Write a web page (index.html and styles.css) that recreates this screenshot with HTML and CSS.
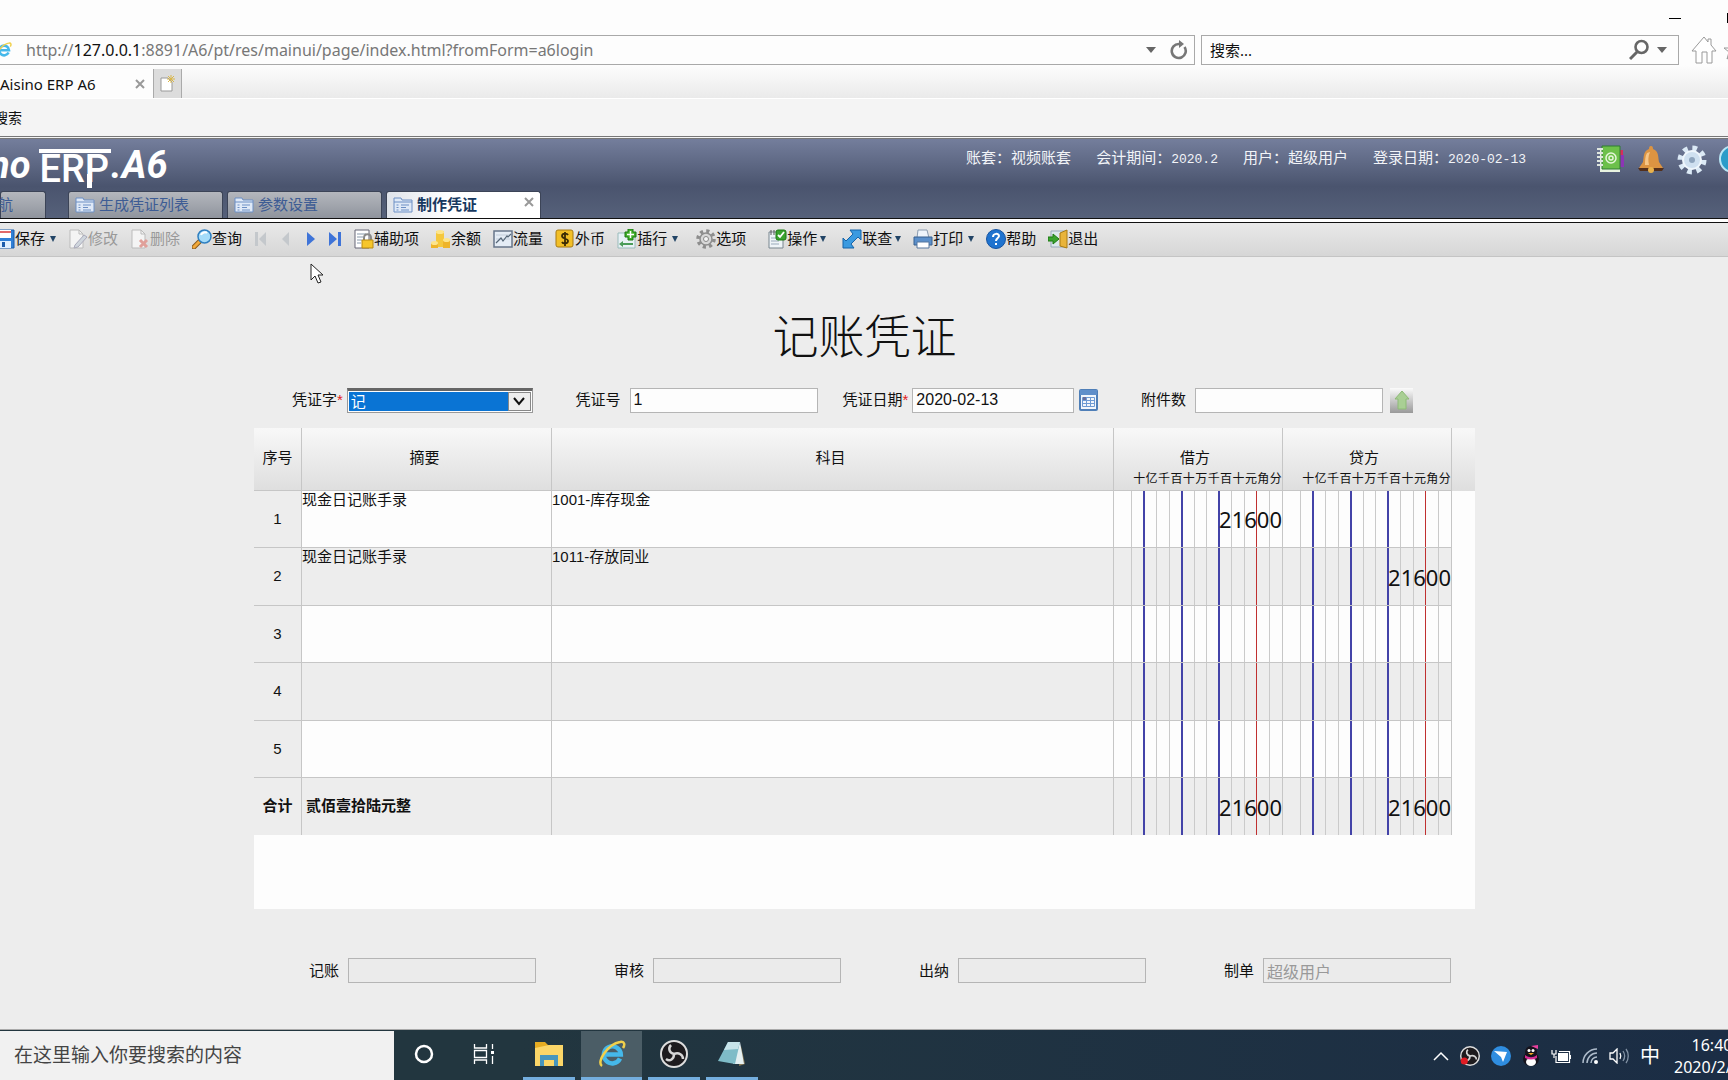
FILE: index.html
```html
<!DOCTYPE html>
<html lang="zh-CN">
<head>
<meta charset="utf-8">
<title>Aisino ERP A6</title>
<link rel="stylesheet" href="styles.css">
</head>
<body>
<svg class="defs" aria-hidden="true">
  <symbol id="i-form" viewBox="0 0 20 16"><path d="M1 1h7l1 2h10v12H1z" fill="#dfe9f7" stroke="#6c8fc4"/><path d="M1 5h18M3.500 8h2M3.500 10.500h2M3.500 13h2M8 8h8M8 10.500h5M8 13h8" stroke="#6c8fc4" fill="none"/></symbol>
  <symbol id="i-doc" viewBox="0 0 20 20"><path d="M2 1h9l4 4v14H2z" fill="#f4f4f4" stroke="#bbb"/><path d="M11 1v4h4" fill="none" stroke="#bbb"/></symbol>
  <symbol id="i-ie" viewBox="0 0 28 28"><path d="M22 18.500a8.500 8.500 0 1 1 .8-4H8" fill="none" stroke="#45b8ea" stroke-width="4.500"/><path d="M4 26C-2 22 10 4 22 2c5-1 5 3 3 6" fill="none" stroke="#f1d04c" stroke-width="2.500"/></symbol>
  <symbol id="i-obs" viewBox="0 0 28 28"><circle cx="14" cy="14" r="13" fill="#1d1b1e" stroke="#ddd" stroke-width="2"/><path d="M14 14c-5-1-6-6-3-9M14 14c5-2 9 1 9 5M14 14c0 5-4 8-8 5" fill="none" stroke="#d6d6d6" stroke-width="2.500"/></symbol>
</svg>

<header class="browser">
  <div class="titlebar">
    <button class="win" aria-label="最小化"><svg width="12" height="10"><path d="M0 5.500h12" stroke="#000"/></svg></button>
    <button class="win" aria-label="最大化"><svg width="10" height="10"><path d="M1 .5h9v9H1z" fill="none" stroke="#000" stroke-width="2"/></svg></button>
  </div>
  <div class="navrow">
    <div class="address">
      <svg class="ie-small" width="16" height="18"><use href="#i-ie"/></svg>
      <span class="url">http://<b>127.0.0.1</b>:8891/A6/pt/res/mainui/page/index.html?fromForm=a6login</span>
      <svg width="10" height="6"><path d="M0 0h10L5 6z" fill="#666"/></svg>
      <button aria-label="刷新"><svg width="18" height="20" viewBox="0 0 18 20"><path d="M14.500 7A7 7 0 1 1 9 4h3" fill="none" stroke="#777" stroke-width="2.600"/><path d="M9 0l5 4-5 4z" fill="#777"/></svg></button>
    </div>
    <div class="websearch">
      <input type="text" placeholder="搜索..." aria-label="搜索">
      <svg width="20" height="22" viewBox="0 0 20 22"><circle cx="12.500" cy="8" r="6" fill="none" stroke="#666" stroke-width="2.600"/><path d="M8 13l-7 7" stroke="#666" stroke-width="3"/></svg>
      <svg width="10" height="6"><path d="M0 0h10L5 6z" fill="#666"/></svg>
    </div>
    <svg class="home" width="26" height="28" viewBox="0 0 26 28"><path d="M1 15L13 1l4 5V3h3v6l5 6h-4v12h-5v-11h-5v11H5V15z" fill="#fff" stroke="#999"/></svg>
    <svg class="star" width="20" height="20" viewBox="0 0 20 20"><path d="M1 8h7l2-7 2 7h7l-5 4 2 7-6-4-6 4 2-7z" fill="#fff" stroke="#999"/></svg>
  </div>
  <nav class="btabs">
    <div class="btab"><span>Aisino ERP A6</span><button aria-label="关闭"><svg width="10" height="10"><path d="M1 1l8 8M9 1L1 9" stroke="#999" stroke-width="2"/></svg></button></div>
    <button class="newtab" aria-label="新建选项卡"><svg width="16" height="18" viewBox="0 0 16 18"><path d="M1 3h7l4 4v9H1z" fill="#fff" stroke="#999"/><path d="M11 0v8M7 4h8M8 1l6 6M14 1L8 7" stroke="#d9b64a"/></svg></button>
  </nav>
  <div class="favbar"><a href="#">搜索</a></div>
</header>

<section class="apphead">
  <div class="brand">
    <div class="logo"><span class="wide">no</span><span class="erp">ERP</span><span>.A6</span></div>
    <ul class="session">
      <li>账套：视频账套</li>
      <li>会计期间：<span>2020.2</span></li>
      <li>用户：超级用户</li>
      <li>登录日期：<span>2020-02-13</span></li>
    </ul>
    <div class="headicons">
      <svg width="28" height="28" viewBox="0 0 28 28"><path d="M23 5h3v5h-3z" fill="#d62c5c"/><path d="M23 10h4v12h-4z" fill="#8d35b5"/><path d="M3 3h20v24H3z" fill="#e8f3e0"/><path d="M5 1h18v23H5z" fill="#6cc04a" stroke="#2e7d32"/><path d="M0 4h6M0 8h6M0 12h6M0 16h6M0 20h6" stroke="#dfe6df" stroke-width="2"/><circle cx="14" cy="13" r="5" fill="none" stroke="#e5f6da" stroke-width="1.500"/><circle cx="14" cy="13" r="2" fill="none" stroke="#e5f6da" stroke-width="1.500"/></svg>
      <svg width="28" height="28" viewBox="0 0 28 28"><path d="M14 1c2 0 2 2 2 3 6 2 5 8 6 13l4 6H2l4-6c1-5 0-11 6-13 0-1 0-3 2-3z" fill="#dc9442"/><path d="M10 8c-2 3-2 8-2 12h4c-1-4-1-9 1-13z" fill="#f6c687"/><path d="M1 23h26l-2 3H3z" fill="#53301c"/><circle cx="14" cy="25" r="3" fill="#e9b24c"/></svg>
      <svg width="30" height="30" viewBox="0 0 30 30"><circle cx="15" cy="15" r="11" fill="none" stroke="#dceaf6" stroke-width="7" stroke-dasharray="4.320"/><circle cx="15" cy="15" r="9" fill="#cfe0f0" stroke="#eff6fc" stroke-width="2"/><circle cx="15" cy="15" r="3" fill="#8ea4bd"/></svg>
      <svg width="28" height="28" viewBox="0 0 28 28"><circle cx="14" cy="14" r="13" fill="#2b9cc9" stroke="#b8e6f5" stroke-width="2"/></svg>
    </div>
  </div>
  <nav class="apptabs">
    <a href="#" class="cut">导航</a>
    <a href="#"><svg><use href="#i-form"/></svg>生成凭证列表</a>
    <a href="#"><svg><use href="#i-form"/></svg>参数设置</a>
    <a href="#" class="on"><svg><use href="#i-form"/></svg>制作凭证<i><svg width="10" height="10"><path d="M1 1l8 8M9 1L1 9" stroke="#999" stroke-width="2"/></svg></i></a>
  </nav>
</section>

<div class="toolbar">
  <button><svg viewBox="0 0 20 20"><path d="M1 1h18v18H1z" fill="#2f7fd6" stroke="#1b5cab"/><path d="M4 1h12v8H4z" fill="#fff"/><path d="M5 12h11v7H5z" fill="#dfefff"/><path d="M7 13h3v5H7z" fill="#1b5cab"/><path d="M4 2h12v2H4z" fill="#e16a6a"/></svg>保存<em class="far"></em></button>
  <button disabled><svg><use href="#i-doc"/><path d="M7 16l9-10 3 2-9 10-4 1z" fill="#cfd6dd" stroke="#aab"/></svg>修改</button>
  <button disabled><svg><use href="#i-doc"/><path d="M10 11l7 7M17 11l-7 7" stroke="#e0a09a" stroke-width="3"/></svg>删除</button>
  <button><svg viewBox="0 0 20 20"><path d="M8 12l-6 6" stroke="#8a5a1c" stroke-width="5" stroke-linecap="round"/><path d="M7 13l-5 5" stroke="#f2a93b" stroke-width="3" stroke-linecap="round"/><circle cx="12.500" cy="7.500" r="6.500" fill="#a5dcf9" stroke="#2f7fc0" stroke-width="1.500"/><path d="M9 6c1-3 5-3 6-2" stroke="#fff" stroke-width="2" fill="none"/></svg>查询</button>
  <button class="nav" disabled aria-label="首张"><svg viewBox="0 0 13 16"><path d="M1 1h3v14H1zM12 1v14L5 8z" fill="#c4c8cc"/></svg></button>
  <button class="nav" disabled aria-label="上张"><svg viewBox="0 0 13 16"><path d="M10 1v14L3 8z" fill="#c4c8cc"/></svg></button>
  <button class="nav" aria-label="下张"><svg viewBox="0 0 13 16"><path d="M3 1v14l8-7z" fill="#3f74d8"/></svg></button>
  <button class="nav" aria-label="末张"><svg viewBox="0 0 13 16"><path d="M0 1v14l8-7zM9 1h3v14H9z" fill="#3f74d8"/></svg></button>
  <button><svg viewBox="0 0 20 20"><path d="M1 1h14v18H1z" fill="#fff" stroke="#667"/><path d="M3 5h9M3 8h6M3 11h5M3 14h4" stroke="#89a"/><path d="M10 11V9c0-5 7-5 7 0v2" fill="none" stroke="#888" stroke-width="2"/><path d="M8 11h11v8H8z" fill="#f6c62c" stroke="#b98a10"/></svg>辅助项</button>
  <button><svg viewBox="0 0 20 20"><path d="M5 2h8v16H5z" fill="#f5c83d"/><ellipse cx="9" cy="3" rx="4" ry="2" fill="#fde58c"/><path d="M0 14h7v5H0zM12 11h7v8h-7z" fill="#eeb42a"/><ellipse cx="3.500" cy="14" rx="3.500" ry="2" fill="#fde58c"/><ellipse cx="15.500" cy="11" rx="3.500" ry="2" fill="#fde58c"/></svg>余额</button>
  <button><svg viewBox="0 0 20 20"><path d="M1 2h18v16H1z" fill="#e4ecf5" stroke="#67768a" stroke-width="1.500"/><path d="M3 6h14M3 10h14" stroke="#c3cedb"/><path d="M3 14l5-5 2 3 4-5 1 1 3-3" fill="none" stroke="#567" stroke-width="1.200"/></svg>流量</button>
  <button><svg viewBox="0 0 20 20"><rect x="1" y="1" width="17" height="17" rx="2" fill="#f2bf27" stroke="#a87b12"/><path d="M13 6C12 4 7 4 7 7s6 2 6 5-5 3-6 1M10 3v14" fill="none" stroke="#3c2c05" stroke-width="1.800"/></svg>外币</button>
  <button><svg viewBox="0 0 20 20"><path d="M1 4h17v15H1z" fill="#e8f1f6" stroke="#9bb"/><path d="M6 12l-4 3 4 3v-2h10v-2H6z" fill="#4a9c5a"/><path d="M11 0h5v3h3v5h-3v3h-5V8H8V3h3z" fill="#43b02a" stroke="#1d7a12"/><path d="M13.500 2v7M10 5.500h7" stroke="#fff" stroke-width="1.500"/></svg>插行<em class="far"></em></button>
  <button class="g2"><svg viewBox="0 0 20 20"><circle cx="10" cy="10" r="8" fill="none" stroke="#8d8d8d" stroke-width="3.500" stroke-dasharray="3.140"/><circle cx="10" cy="10" r="6" fill="#d8d8d8" stroke="#8d8d8d" stroke-width="1.500"/><circle cx="10" cy="10" r="2.500" fill="#f5f5f5" stroke="#888"/></svg>选项</button>
  <button class="g3"><svg viewBox="0 0 20 20"><path d="M2 3h14v16H2z" fill="#eef4f8" stroke="#78868f"/><path d="M4 1v5M7 1v5" stroke="#555"/><path d="M4 9h5M4 12h8M4 15h8" stroke="#9ab"/><rect x="9" y="1" width="10" height="10" rx="2" fill="#3aa32f" stroke="#1d7a12"/><path d="M11 6l2 2 4-5" fill="none" stroke="#fff" stroke-width="1.800"/></svg>操作<em></em></button>
  <button class="g1"><svg viewBox="0 0 20 20"><path d="M8 1h11v10l-3-3-7 7 3 4H1V9l3 3 7-7z" fill="#3a9ae0" stroke="#1563a8"/></svg>联查<em></em></button>
  <button><svg viewBox="0 0 20 20"><path d="M5 1h9l2 8H4z" fill="#eef4fb" stroke="#8a9bb0"/><path d="M1 8h18v8H1z" fill="#5b8fca" stroke="#38618f"/><path d="M4 13h12v6H4z" fill="#fff" stroke="#56779f"/></svg>打印<em class="far"></em></button>
  <button><svg viewBox="0 0 20 20"><circle cx="10" cy="10" r="9.500" fill="#1f73cf" stroke="#1553a0"/><path d="M7 8c0-4 6-4 6-1 0 2-3 2-3 5M10 14v2" fill="none" stroke="#fff" stroke-width="2"/></svg>帮助</button>
  <button><svg viewBox="0 0 20 20"><path d="M3 2h15v16H3z" fill="#dce8ee" stroke="#9ab"/><path d="M12 4l7-3v18l-7-2z" fill="#e9b43a" stroke="#a87b12"/><path d="M0 8h5V5l6 5-6 5v-3H0z" fill="#3aa32f" stroke="#1d7a12"/></svg>退出</button>
</div>

<main>
  <h1>记账凭证</h1>
  <form class="fields">
    <div class="f"><label class="req" for="word">凭证字<sup>*</sup></label>
      <div class="pick"><select id="word"><option>记</option></select><span><svg width="12" height="10"><path d="M1 2l5 6 5-6" fill="none" stroke="#111" stroke-width="2"/></svg></span></div></div>
    <div class="pair">
      <div class="f"><label for="no">凭证号</label><input id="no" type="text" value="1"></div>
      <div class="f"><label class="req" for="date">凭证日期<sup>*</sup></label><input id="date" class="date" type="text" value="2020-02-13">
        <button type="button" aria-label="选择日期"><svg width="19" height="22" viewBox="0 0 19 22"><rect x="1" y="1" width="17" height="20" rx="1" fill="#f1f6fc" stroke="#4f7fb8" stroke-width="2"/><path d="M1 1h17v5H1z" fill="#5f8fca"/><path d="M3.500 8.500h12v9h-12zM3.500 11.500h12M3.500 14.500h12M7.500 8v9M11.500 8v9" fill="none" stroke="#6d9ad4"/><path d="M4 8h3v3H4z" fill="#6a6f9c"/></svg></button></div>
    </div>
    <div class="f"><label for="att">附件数</label><input id="att" type="text">
      <button type="button" class="up" aria-label="上传附件"><svg width="18" height="20" viewBox="0 0 18 20"><path d="M9 1l7 8h-3v10H5V9H2z" fill="#a9cf94" stroke="#8dba76"/></svg></button></div>
  </form>

  <div class="sheet">
    <table>
      <colgroup><col class="c1"><col class="c2"><col><col class="c4"><col class="c4"><col class="c5"></colgroup>
      <thead><tr><th>序号</th><th class="s">摘要</th><th class="s">科目</th>
        <th class="m">借方<div class="units"><span>十</span><span>亿</span><span>千</span><span>百</span><span>十</span><span>万</span><span>千</span><span>百</span><span>十</span><span>元</span><span>角</span><span>分</span></div></th>
        <th class="m">贷方<div class="units"><span>十</span><span>亿</span><span>千</span><span>百</span><span>十</span><span>万</span><span>千</span><span>百</span><span>十</span><span>元</span><span>角</span><span>分</span></div></th>
        <th class="pad"></th></tr></thead>
      <tbody>
        <tr><td class="n">1</td><td>现金日记账手录</td><td>1001-库存现金</td><td class="money">21600</td><td class="money"></td><td class="pad"></td></tr>
        <tr><td class="n">2</td><td>现金日记账手录</td><td>1011-存放同业</td><td class="money"></td><td class="money">21600</td><td class="pad"></td></tr>
        <tr><td class="n">3</td><td></td><td></td><td class="money"></td><td class="money"></td><td class="pad"></td></tr>
        <tr><td class="n">4</td><td></td><td></td><td class="money"></td><td class="money"></td><td class="pad"></td></tr>
        <tr><td class="n">5</td><td></td><td></td><td class="money"></td><td class="money"></td><td class="pad"></td></tr>
      </tbody>
      <tfoot><tr><td class="n">合计</td><td class="sum">贰佰壹拾陆元整</td><td></td><td class="money">21600</td><td class="money">21600</td><td class="pad"></td></tr></tfoot>
    </table>
  </div>

  <div class="signs">
    <div class="f"><label for="s1">记账</label><input id="s1" type="text" disabled></div>
    <div class="f"><label for="s2">审核</label><input id="s2" type="text" disabled></div>
    <div class="f"><label for="s3">出纳</label><input id="s3" type="text" disabled></div>
    <div class="f"><label for="s4">制单</label><input id="s4" type="text" value="超级用户" disabled></div>
  </div>
</main>

<footer class="taskbar">
  <input type="text" placeholder="在这里输入你要搜索的内容" aria-label="在这里输入你要搜索的内容">
  <div class="apps">
    <button aria-label="Cortana"><svg width="22" height="22"><circle cx="11" cy="11" r="8" fill="none" stroke="#fff" stroke-width="2.500"/></svg></button>
    <button aria-label="任务视图"><svg width="22" height="20" viewBox="0 0 22 20"><path d="M1.500 0v4h12V0M1.500 20v-4h12v4M1.500 6.500h12v7h-12zM19.500 0v5M19.500 12v8" fill="none" stroke="#fff" stroke-width="1.300"/><path d="M18 7h3v3h-3z" fill="#fff"/></svg></button>
    <button class="run first" aria-label="文件资源管理器"><svg width="28" height="26" viewBox="0 0 28 26"><path d="M0 1h10l3 3h14v21H0z" fill="#e6ac22"/><path d="M0 7l14-3h14v21H0z" fill="#fbd668"/><path d="M5 25V14h18v11h-4v-6h-10v6z" fill="#4796bd"/></svg></button>
    <button class="run active" aria-label="Internet Explorer"><svg width="28" height="28"><use href="#i-ie"/></svg></button>
    <button class="run" aria-label="OBS"><svg width="28" height="28"><use href="#i-obs"/></svg></button>
    <button class="run" aria-label="记事本"><svg width="28" height="26" viewBox="0 0 28 26"><path d="M23 5l4 18-6 2z" fill="#8a7b58"/><path d="M22 1l4 22H15z" fill="#e4eff1"/><path d="M10 1h12l-5 22L0 20z" fill="#7fbcc8"/><path d="M10 1h12l-2 7L6 9z" fill="#c7e4ea"/></svg></button>
  </div>
  <div class="tray">
    <svg width="16" height="10"><path d="M1 9l7-7 7 7" fill="none" stroke="#fff" stroke-width="1.500"/></svg>
    <svg width="20" height="20" viewBox="0 0 28 28"><use href="#i-obs"/><circle cx="6" cy="21" r="5" fill="#e01c24"/></svg>
    <svg width="20" height="20"><circle cx="10" cy="10" r="10" fill="#2f8de0"/><path d="M3 5l13 1-4 10-2-5z" fill="#fff"/></svg>
    <svg width="18" height="22" viewBox="0 0 18 22"><ellipse cx="9" cy="14" rx="8" ry="7" fill="#16131c"/><circle cx="9" cy="7" r="6" fill="#16131c"/><ellipse cx="9" cy="17" rx="5" ry="4" fill="#fff"/><path d="M3 10c4 3 8 3 12 0v3c-4 2-8 2-12 0z" fill="#d42c93"/><path d="M9 1l7-1v4z" fill="#e8409f"/><circle cx="7" cy="5.500" r="1.500" fill="#fff"/><circle cx="11" cy="5.500" r="1.500" fill="#fff"/><path d="M6 8h6l-3 2z" fill="#f5a623"/></svg>
    <svg width="20" height="14" viewBox="0 0 20 14"><path d="M7 4h10v8H7z" fill="#fff"/><path d="M5 7v6.500h13.500v-11H8M19.500 6v4M1 1v4h4V1M3 5v4" fill="none" stroke="#fff" stroke-width="1.200"/></svg>
    <svg width="16" height="16" viewBox="0 0 16 16"><path d="M1 15A14 14 0 0 1 15 1M5 15A10 10 0 0 1 15 5M9 15a6 6 0 0 1 6-6" fill="none" stroke="#aebccb" stroke-width="1.500"/><circle cx="14" cy="14" r="2" fill="#fff"/></svg>
    <svg width="20" height="16" viewBox="0 0 20 16"><path d="M1 5h3l4-4v14l-4-4H1z" fill="none" stroke="#fff" stroke-width="1.300"/><path d="M11 5c1 2 1 4 0 6" fill="none" stroke="#fff" stroke-width="1.300"/><path d="M14 3c2 3 2 7 0 10M17 1c3 4 3 10 0 14" fill="none" stroke="#8393a5" stroke-width="1.300"/></svg>
    <span class="ime">中</span>
    <div class="clock"><span>16:40</span><span>2020/2/13</span></div>
  </div>
</footer>
<svg class="pointer" width="14" height="21" viewBox="0 0 14 21"><path d="M1 1v16l4-4 3 7 3-1-3-7h5z" fill="#fff" stroke="#222"/></svg>
</body>
</html>
```
FILE: styles.css
```css
* { box-sizing: border-box; }
body {
  margin: 0;
  min-height: 100vh;
  display: flex;
  flex-direction: column;
  overflow: hidden;
  background: #ededed;
  color: #111;
  font: 15px/20px "Liberation Sans", "Noto Sans CJK SC", sans-serif;
}
button {
  margin: 0;
  padding: 0;
  border: 0;
  background: none;
  font: inherit;
  color: inherit;
  display: flex;
  align-items: center;
  justify-content: center;
}
input, select { font: inherit; color: inherit; min-width: 0; border-radius: 0; }
a { color: inherit; text-decoration: none; }
svg { display: block; flex: none; }
.defs { position: absolute; width: 0; height: 0; }

/* browser window */
.browser { background: #fdfdfd; flex: none; font-family: "Noto Sans", "Noto Sans CJK SC", sans-serif; }
.titlebar { height: 35px; display: flex; justify-content: flex-end; gap: 46px; margin-right: -9px; }
.navrow { display: flex; align-items: center; height: 30px; gap: 6px; margin-right: -15px; }
.address, .websearch { display: flex; align-items: center; height: 30px; border: 1px solid #a9a9a9; }
.address { flex: 1; border-left: 0; padding-right: 6px; gap: 14px; }
.websearch { width: 478px; padding: 0 11px 0 8px; gap: 8px; }
.websearch input { flex: 1; border: 0; background: none; padding: 0; }
.websearch input::placeholder { color: #111; opacity: 1; }
.ie-small { margin-left: -4px; }
.url { flex: 1; color: #777; font-size: 16px; }
.url b { font-weight: 400; color: #111; }
.home { margin-left: 6px; }
.btabs { display: flex; height: 33px; padding-top: 4px; background: linear-gradient(#fdfdfd, #eaeaea); }
.btab { width: 154px; display: flex; align-items: center; justify-content: space-between; padding: 0 8px 0 0; background: #fdfdfd; border-right: 1px solid #aaa; }
.newtab { width: 28px; background: #dcdcdc; border-right: 1px solid #aaa; }
.favbar { height: 41px; border-top: 1px solid #fff; border-bottom: 3px double #777; background: #f4f4f4; line-height: 38px; font-size: 14px; }
.favbar a { margin-left: -6px; }

/* application header */
.apphead { flex: none; background: linear-gradient(#747e9c, #4a546e 60%, #56617a); border-bottom: 1px solid #111; }
.brand { display: flex; height: 52px; margin-right: -19px; }
.logo { flex: 1; display: flex; align-items: flex-start; padding-top: 6px; margin-left: -11px; color: #fff; font: italic 700 38px/40px Roboto, sans-serif; }
.wide { margin-right: 9px; }
.erp { position: relative; height: 36px; margin-top: 4px; padding-right: 2px; border-top: 4px solid #fff; font-style: normal; font-weight: 500; line-height: 32px; }
.erp::after { content: ""; position: absolute; right: 19px; bottom: -3px; width: 5px; height: 14px; background: #fff; }
.session { display: flex; gap: 25px; margin: 9px 71px 0 0; padding: 0; list-style: none; color: #f2f4f8; }
.session span { font-family: "Liberation Mono", monospace; font-size: 13px; }
.headicons { display: flex; gap: 12px; padding-top: 6px; }
.apptabs { display: flex; gap: 4px; height: 27px; }
.apptabs a { width: 155px; display: flex; align-items: center; gap: 4px; padding: 0 6px; border: 1px solid #3c4457; border-bottom: 0; border-radius: 3px 3px 0 0; background: linear-gradient(#b4b7bd, #8f949d); color: #3d5c94; }
.apptabs svg { width: 20px; height: 16px; }
.apptabs .cut { width: 46px; margin-right: 18px; padding: 0; text-indent: -18px; }
.apptabs .on { background: linear-gradient(90deg, #dfe3ea, #fff 40%); color: #17385f; font-weight: 700; }
.apptabs i { margin-left: auto; align-self: flex-start; padding-top: 5px; }
.apptabs i svg { width: 10px; height: 10px; }

/* voucher toolbar */
.toolbar { flex: none; display: flex; align-items: center; gap: 12px; height: 38px; border-top: 3px solid #fff; border-bottom: 1px solid #c4c4c4; background: linear-gradient(#111 1px, #e9e9e9 1px, #d6d6d6); }
.toolbar button:first-child { margin-left: -5px; }
.toolbar button { height: 24px; flex: none; }
.toolbar svg { width: 20px; height: 20px; }
.toolbar button:disabled { color: #999; }
.toolbar .nav svg { width: 13px; height: 16px; }
.toolbar em { border: 3px solid transparent; border-top: 6px solid #246; border-bottom: 0; margin-left: 3px; }
.toolbar .far { margin-left: 5px; }
.toolbar .g1 { margin-left: 4px; }
.toolbar .g2 { margin-left: 6px; }
.toolbar .g3 { margin-left: 9px; }

/* voucher */
main { flex: 1; margin: 0 253px 0 254px; }
h1 { margin: 46px 0 22px; text-align: center; font: 300 46px/60px "Noto Sans CJK SC", sans-serif; color: #111; }
.f { display: flex; align-items: center; }
.f label { margin-right: 9px; white-space: nowrap; }
.f label.req { margin-right: 4px; }
.f sup { color: #e02020; font-size: 15px; line-height: 1; vertical-align: baseline; }
.f input { width: 188px; height: 25px; padding: 0 3px; border: 1px solid #b5b5b5; background: #fdfdfd; font-size: 16px; }
.f input:disabled { background: #ebebeb; color: #999; }
.fields, .pair { display: flex; justify-content: space-between; }
.fields { padding: 0 62px 0 38px; height: 30px; margin-bottom: 13px; }
.pair { gap: 25px; }
.f .date { width: 162px; }
.f button { margin-left: 5px; }
.f .up { width: 23px; height: 25px; margin-left: 7px; background: linear-gradient(#fbfbfb, #999); }
.pick { display: flex; width: 186px; height: 25px; padding: 1px; border: 1px solid #999; border-top: 3px solid #666; background: #fdfdfd; }
.pick select { flex: 1; appearance: none; border: 0; padding: 0 2px; background: #0a74d4; color: #fff; }
.pick span { display: flex; align-items: center; justify-content: center; width: 23px; border: 1px solid #888; background: #eee; }

.sheet { background: #fdfdfd; padding-bottom: 74px; }
table { width: 100%; border-collapse: separate; border-spacing: 0; table-layout: fixed; }
.c1 { width: 48px; }
.c2 { width: 250px; }
.c4 { width: 169px; }
.c5 { width: 23px; }
thead tr { background: linear-gradient(#f8f8f8, #dedede); }
th { height: 63px; padding: 0 0 2px; font-weight: 400; border-right: 1px solid #c6c6c6; border-bottom: 1px solid #c6c6c6; }
th.s { padding-right: 4px; }
th.m { padding: 20px 0 0; vertical-align: top; text-indent: -6px; }
.units { display: grid; grid-template-columns: repeat(12, 1fr); margin-left: 19px; font-size: 12px; line-height: 22px; text-indent: 0; }
td { height: 57px; padding: 0; vertical-align: top; line-height: 17px; border-right: 1px solid #c6c6c6; border-bottom: 1px solid #c6c6c6; }
tbody tr:nth-child(even) td { height: 58px; }
tbody tr:nth-child(even), tfoot tr, td.n { background: #ededed; }
td.n { text-align: center; vertical-align: middle; padding-bottom: 2px; }
tfoot td { border-bottom: 0; font-weight: 700; }
td.sum { vertical-align: middle; padding: 0 0 2px 4px; }
td.money {
  --g: linear-gradient(#cacaca, #cacaca);
  --b: linear-gradient(#4343a8, #4343a8);
  --r: linear-gradient(#c03030, #c03030);
  text-align: right;
  vertical-align: middle;
  font: 400 22px/24px "Noto Sans", sans-serif;
  background-image: var(--g), var(--b), var(--g), var(--g), var(--b), var(--g), var(--g), var(--b), var(--g), var(--g), var(--r), var(--g);
  background-position: 17px 0, 29px 0, 42px 0, 55px 0, 67px 0, 80px 0, 92px 0, 104px 0, 117px 0, 130px 0, 142px 0, 155px 0;
  background-size: 1px 100%, 2px 100%, 1px 100%, 1px 100%, 2px 100%, 1px 100%, 1px 100%, 2px 100%, 1px 100%, 1px 100%, 1px 100%, 1px 100%;
  background-repeat: no-repeat;
}
th.pad, td.pad { border: 0; }
td.pad { background: #fdfdfd; }
.signs { display: flex; justify-content: space-between; padding: 49px 24px 0 55px; }

/* system taskbar */
.taskbar { flex: none; display: flex; height: 51px; padding-top: 1px; border-top: 1px solid #aaa; background: linear-gradient(90deg, #22363f 30%, #1b2d45); color: #fff; }
.taskbar > input { width: 394px; border: 0; padding: 0 14px; background: #f1f1f1; font-size: 19px; }
.taskbar > input::placeholder { color: #444; opacity: 1; }
.apps { display: flex; gap: 6px; margin-left: 3px; }
.apps button { width: 54px; border-bottom: 3px solid transparent; }
.apps .run { width: 52px; border-color: #74aede; }
.apps .first { margin-left: 6px; }
.apps .active { width: 61px; background: #4b5d66; }
.tray { margin-left: auto; display: flex; align-items: center; gap: 11px; margin-right: -22px; }
.ime { font-size: 20px; margin-right: 3px; }
.clock { display: flex; flex-direction: column; align-items: center; font: 16px/22px "Noto Sans", sans-serif; }

.pointer { position: absolute; left: 310px; top: 263px; }
```
